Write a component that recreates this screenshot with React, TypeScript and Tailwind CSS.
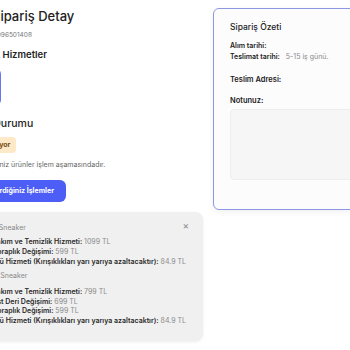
import React from "react";

export default function App() {
  const bold = "font-semibold text-[#2a2a2a]";
  return (
    <div className="w-[350px] h-[350px] overflow-hidden bg-white font-['Inter',sans-serif] text-[#222]">
      <div className="flex ml-[-60px] gap-[10px]">
        {/* left column */}
        <div className="w-[263px] shrink-0 flex flex-col">
          <h1 className="mt-[6px] ml-[52px] text-[13px] leading-[20px] font-medium whitespace-nowrap">Sipariş Detay</h1>
          <p className="mt-[4px] ml-[50px] text-[6.5px] leading-[10px] text-[#777]">#1096501408</p>
          <h2 className="mt-[9px] ml-[49px] text-[9.5px] leading-[12px] font-semibold">Ek Hizmetler</h2>
          <div className="mt-[7px] ml-[11px] w-[50px] h-[38px] rounded-[6px] border-[1.5px] border-[#6a78f0]" />
          <h2 className="mt-[11px] ml-[16px] text-[10.5px] leading-[14px] font-medium whitespace-nowrap">Sipariş Durumu</h2>
          <div className="mt-[6px] ml-[35px] self-start h-[16px] px-[6px] rounded-[4px] bg-[#fde8c8] text-[#7a4b12] text-[7px] font-bold flex items-center">İşleniyor</div>
          <p className="mt-[7px] ml-[23px] text-[7px] leading-[10px] text-[#666] whitespace-nowrap">Gönderdiğiniz ürünler işlem aşamasındadır.</p>
          <button className="mt-[10px] ml-[16px] self-start w-[110px] h-[22px] rounded-[6px] bg-[#4c5ef6] text-white text-[7px] font-bold flex items-center justify-end pr-[12px] whitespace-nowrap">Gönderdiğiniz İşlemler</button>
          <div className="mt-[10px] ml-[36px] h-[129px] rounded-[8px] bg-[#f0f0f0] shadow-[0_1px_3px_rgba(0,0,0,0.08)] pl-[16px] pr-[16px] pt-[11px] relative text-[7px]">
            <span className="absolute right-[14px] top-[8px] text-[10px] leading-[10px] text-[#888]">×</span>
            <p className="leading-[10px] text-[#888]">1. Sneaker</p>
            <div className="mt-[4px] leading-[10px] whitespace-nowrap text-[#8a8a8a]">
              <p><span className={bold}>Bakım ve Temizlik Hizmeti:</span> 1099 TL</p>
              <p><span className={bold}>Çoraplık Değişimi:</span> 599 TL</p>
              <p><span className={bold}>Ütü Hizmeti (Kırışıklıkları yarı yarıya azaltacaktır):</span> 84.9 TL</p>
            </div>
            <p className="mt-[4px] leading-[10px] text-[#888]">2. Sneaker</p>
            <div className="mt-[6px] leading-[9.5px] whitespace-nowrap text-[#8a8a8a]">
              <p><span className={bold}>Bakım ve Temizlik Hizmeti:</span> 799 TL</p>
              <p><span className={bold}>Üst Deri Değişimi:</span> 699 TL</p>
              <p><span className={bold}>Çoraplık Değişimi:</span> 599 TL</p>
              <p><span className={bold}>Ütü Hizmeti (Kırışıklıkları yarı yarıya azaltacaktır):</span> 84.9 TL</p>
            </div>
          </div>
        </div>
        {/* right card */}
        <div className="mt-[8px] w-[190px] h-[202px] shrink-0 rounded-[6px] border border-[#8e97e6] bg-[#fcfcfd] shadow-[0_2px_6px_rgba(0,0,0,0.06)] pl-[16px] pt-[12px] flex flex-col">
          <h3 className="text-[8.5px] leading-[12px] font-medium">Sipariş Özeti</h3>
          <div className="mt-[8px] text-[7px] leading-[10px]">
            <p className="font-semibold">Alım tarihi:</p>
            <p className="mt-[1px] whitespace-nowrap"><span className="font-semibold">Teslimat tarihi:</span><span className="ml-[6px] text-[#888]">5-15 iş günü.</span></p>
          </div>
          <p className="mt-[12px] text-[7.5px] leading-[12px] font-semibold">Teslim Adresi:</p>
          <p className="mt-[9px] text-[7.5px] leading-[12px] font-semibold">Notunuz:</p>
          <div className="mt-[2px] h-[71px] rounded-[4px] bg-[#f6f6f6] border border-[#eeeeee]" />
        </div>
      </div>
    </div>
  );
}
